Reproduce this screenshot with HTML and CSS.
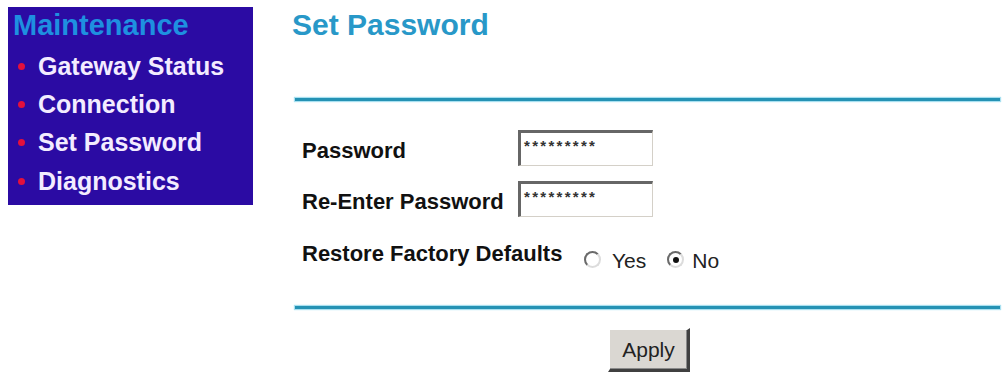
FILE: index.html
```html
<!DOCTYPE html>
<html>
<head>
<meta charset="utf-8">
<link rel="stylesheet" href="styles.css">
</head>
<body>
<div class="page">
  <nav class="sidebar">
    <div class="side-title">Maintenance</div>
    <ul class="side-menu">
      <li><span class="dot"></span>Gateway Status</li>
      <li><span class="dot"></span>Connection</li>
      <li><span class="dot"></span>Set Password</li>
      <li><span class="dot"></span>Diagnostics</li>
    </ul>
  </nav>
  <main class="content">
    <h1 class="title">Set Password</h1>
    <div class="rule"></div>
    <div class="form">
      <div class="row">
        <span class="lbl lbl-field">Password</span>
        <div class="field">*********</div>
      </div>
      <div class="row">
        <span class="lbl lbl-field">Re-Enter Password</span>
        <div class="field">*********</div>
      </div>
      <div class="row restore">
        <span class="lbl lbl-wide">Restore Factory Defaults</span>
        <div class="radios">
          <span class="radio"></span><span class="opt opt-yes">Yes</span>
          <span class="radio checked"></span><span class="opt opt-no">No</span>
        </div>
      </div>
    </div>
    <div class="rule rule-bottom"></div>
    <div class="actions"><button class="btn">Apply</button></div>
  </main>
</div>
</body>
</html>
```

FILE: styles.css
```css
html, body {
  margin: 0;
  padding: 0;
  background: #ffffff;
}
body {
  font-family: "Liberation Sans", Arial, sans-serif;
  color: #111111;
}
.page {
  display: flex;
  align-items: flex-start;
  padding: 7px 0 0 8px;
  width: 1004px;
  box-sizing: border-box;
}
.sidebar {
  flex: 0 0 245px;
  height: 198px;
  box-sizing: border-box;
  background: #2b0ba3;
  padding: 1px 0 0 5px;
}
.side-title {
  font-size: 29px;
  font-weight: bold;
  line-height: 34px;
  color: #1e90e0;
}
.side-menu {
  list-style: none;
  margin: 5px 0 0 0;
  padding: 0;
}
.side-menu li {
  display: flex;
  align-items: center;
  height: 38.4px;
  font-size: 25px;
  font-weight: bold;
  color: #f3ecff;
  white-space: nowrap;
}
.dot {
  width: 7px;
  height: 7px;
  border-radius: 50%;
  background: #e3103c;
  margin: 0 13px 0 5px;
  flex: 0 0 auto;
}
.content {
  flex: 1;
  margin: 0 4px 0 39px;
}
.title {
  margin: 0;
  padding-top: 1px;
  font-size: 30px;
  line-height: 34px;
  font-weight: bold;
  color: #2898c8;
}
.rule {
  margin: 56px 0 0 3px;
  height: 3px;
  background: #2592b4;
  box-shadow: 0 0 1px 1px #a8e0f0;
}
.rule-bottom {
  margin-top: 30px;
}
.form {
  padding-left: 10px;
  padding-top: 29px;
}
.row {
  display: flex;
  align-items: center;
  height: 36px;
  margin-bottom: 15px;
}
.lbl {
  flex: 0 0 216px;
  font-size: 22px;
  font-weight: bold;
  white-space: nowrap;
}
.lbl-field {
  padding-top: 5px;
}
.lbl-wide {
  flex-basis: 282px;
  line-height: 30px;
}
.field {
  box-sizing: border-box;
  width: 135px;
  height: 36px;
  background: #ffffff;
  border-top: 3px solid #666666;
  border-left: 3px solid #666666;
  border-right: 1px solid #d4d0c8;
  border-bottom: 1px solid #d4d0c8;
  padding: 5px 0 0 3px;
  font-size: 15px;
  font-weight: bold;
  line-height: 16px;
  letter-spacing: 2.3px;
  color: #333333;
  align-self: flex-start;
}
.restore {
  align-items: flex-start;
  height: 37px;
  margin-top: 22px;
  margin-bottom: 0;
}
.radios {
  display: flex;
  align-items: flex-start;
  padding-top: 7px;
  font-size: 21px;
  line-height: 30px;
  color: #222222;
}
.radio {
  box-sizing: border-box;
  width: 17px;
  height: 17px;
  margin-top: 5px;
  border-radius: 50%;
  border: 2px solid;
  border-color: #6a6a6a #dcdcdc #dcdcdc #6a6a6a;
  background: #ffffff;
  position: relative;
  flex: 0 0 auto;
}
.radio.checked::after {
  content: "";
  position: absolute;
  left: 3.5px;
  top: 3.5px;
  width: 6px;
  height: 6px;
  border-radius: 50%;
  background: #111111;
}
.opt-yes {
  margin-left: 11px;
  margin-right: 21px;
}
.opt-no {
  margin-left: 8px;
}
.actions {
  display: flex;
  justify-content: center;
  margin: 19px 0 0 6px;
}
.btn {
  box-sizing: border-box;
  width: 82px;
  height: 44px;
  padding: 0;
  background: #dad7d2;
  border-style: solid;
  border-width: 2px 3px 3px 2px;
  border-color: #ffffff #404040 #404040 #ffffff;
  box-shadow: inset -1px -1px 0 #8a8a8a;
  font-family: "Liberation Sans", Arial, sans-serif;
  font-size: 21px;
  color: #222222;
}
```
